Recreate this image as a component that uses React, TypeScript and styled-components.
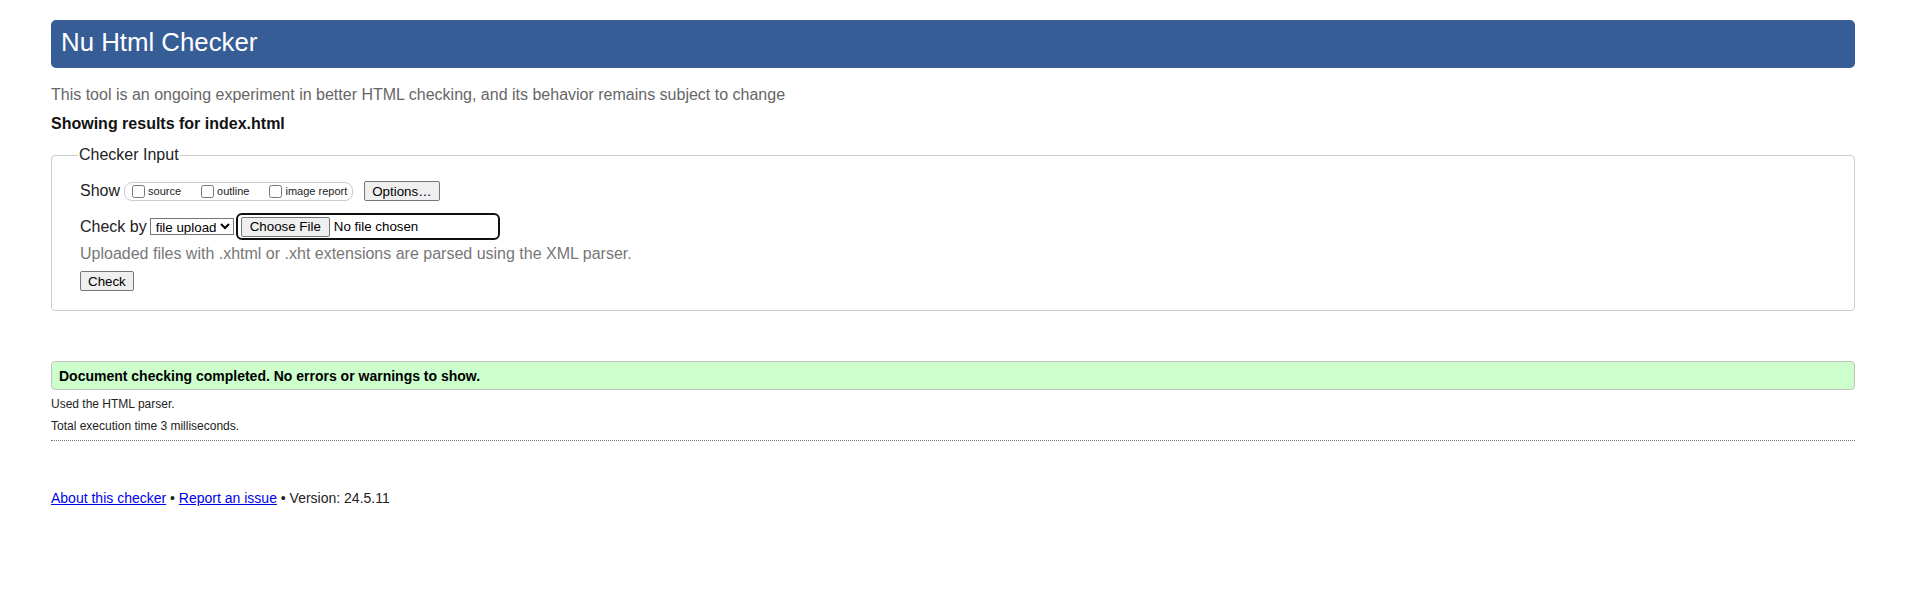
import React from 'react';
import styled, { createGlobalStyle } from 'styled-components';

const GlobalStyle = createGlobalStyle`
  html, body {
    margin: 0;
    padding: 0;
    background: #fff;
  }
  body {
    font-family: "Liberation Sans", Arial, Helvetica, sans-serif;
    font-size: 16px;
    color: #222;
  }
`;

const Page = styled.div`
  padding: 20px 52px 40px 51px;
`;

const Title = styled.h1`
  margin: 0;
  height: 48px;
  box-sizing: border-box;
  padding: 8px 10px 0;
  background: #365d95;
  color: #fff;
  font-size: 25.8px;
  font-weight: normal;
  line-height: 29px;
  border-radius: 5px;
`;

const Intro = styled.p`
  margin: 18px 0 0;
  color: #666;
  font-size: 16px;
`;

const Results = styled.p`
  margin: 11px 0 0;
  font-weight: bold;
  color: #111;
`;

const InputSet = styled.fieldset`
  margin: 13px 0 0;
  padding: 17px 28px 19px 28px;
  border: 1px solid #ccc;
  border-radius: 4px;
  min-width: 0;
`;

const Legend = styled.legend`
  margin-left: -2px;
  padding: 0 1px;
  font-size: 16px;
  color: #222;
`;

const Row = styled.div<{ $gap?: number; $top?: number; $height?: number }>`
  display: flex;
  align-items: center;
  height: ${(p) => p.$height ?? 20}px;
  margin-top: ${(p) => p.$top ?? 0}px;
  gap: ${(p) => p.$gap ?? 4}px;
`;

const FieldLabel = styled.span`
  font-size: 16px;
  color: #222;
`;

const ShowGroup = styled.div`
  display: flex;
  align-items: center;
  height: 19px;
  box-sizing: border-box;
  border: 1px solid #ccc;
  border-radius: 8px;
  padding: 0 5px 0 3px;
  gap: 16px;
`;

const CheckItem = styled.label`
  display: flex;
  align-items: center;
  font-size: 11px;
  color: #222;
`;

const CheckBox = styled.input.attrs({ type: 'checkbox' })`
  width: 13px;
  height: 13px;
  margin: 0 3px 0 4px;
`;

const Button = styled.button<{ $ml?: number }>`
  height: 20px;
  margin-left: ${(p) => p.$ml ?? 0}px;
  padding: 1px 7px;
  font-family: "Liberation Sans", Arial, sans-serif;
  font-size: 13.3333px;
  color: #000;
  background: #efefef;
  border: 1px solid #767676;
  border-radius: 2px;
  box-sizing: border-box;
`;

const Select = styled.select`
  width: 84px;
  height: 17px;
  font-family: "Liberation Sans", Arial, sans-serif;
  font-size: 13.3333px;
  color: #000;
  border: 1px solid #767676;
  border-radius: 0;
  padding: 0 0 0 1px;
  margin-left: 2px;
  background: #fff;
`;

const FileBox = styled.label`
  display: inline-flex;
  align-items: center;
  width: 264px;
  height: 27px;
  margin-left: 1px;
  box-sizing: border-box;
  border: 2px solid #101010;
  border-radius: 6px;
  box-shadow: inset 0 0 0 1px #fff;
  padding: 0 3px;
  font-family: "Liberation Sans", Arial, sans-serif;
  font-size: 13.3333px;
  color: #000;
`;

const FileButton = styled.span`
  display: inline-flex;
  align-items: center;
  height: 20px;
  box-sizing: border-box;
  padding: 0 8px;
  background: #efefef;
  border: 1px solid #767676;
  border-radius: 2px;
  margin-right: 4px;
`;

const Hint = styled.p`
  margin: 5px 0 0;
  color: #777;
  font-size: 16px;
`;

const CheckRow = styled.div`
  margin-top: 8px;
`;

const Status = styled.div`
  margin-top: 50px;
  padding: 6px 7px 5px;
  background: #ccffcc;
  border: 1px solid #c3c3c3;
  border-radius: 4px;
  font-size: 14px;
  font-weight: bold;
  color: #000;
`;

const Detail = styled.p<{ $top: number }>`
  margin: ${(p) => p.$top}px 0 0;
  font-size: 12px;
  color: #222;
`;

const Divider = styled.hr`
  margin: 7px 0 0;
  border: 0;
  border-top: 1px dotted #777;
  height: 0;
`;

const Footer = styled.p`
  margin: 49px 0 0;
  font-size: 14px;
  color: #222;
`;

const Link = styled.a`
  color: #0000ee;
  text-decoration: underline;
`;

export default function App() {
  return (
    <>
      <GlobalStyle />
      <Page>
        <Title>Nu Html Checker</Title>
        <Intro>
          This tool is an ongoing experiment in better HTML checking, and its behavior remains subject to change
        </Intro>
        <Results>Showing results for index.html</Results>
        <InputSet>
          <Legend>Checker Input</Legend>
          <Row $gap={4}>
            <FieldLabel>Show</FieldLabel>
            <ShowGroup>
              <CheckItem>
                <CheckBox />
                source
              </CheckItem>
              <CheckItem>
                <CheckBox />
                outline
              </CheckItem>
              <CheckItem>
                <CheckBox />
                image report
              </CheckItem>
            </ShowGroup>
            <Button $ml={7}>Options…</Button>
          </Row>
          <Row $gap={1} $top={12} $height={27}>
            <FieldLabel>Check by</FieldLabel>
            <Select defaultValue="file">
              <option value="file">file upload</option>
              <option value="address">address</option>
              <option value="text">text input</option>
            </Select>
            <FileBox>
              <FileButton>Choose File</FileButton>
              No file chosen
            </FileBox>
          </Row>
          <Hint>Uploaded files with .xhtml or .xht extensions are parsed using the XML parser.</Hint>
          <CheckRow>
            <Button>Check</Button>
          </CheckRow>
        </InputSet>
        <Status>Document checking completed. No errors or warnings to show.</Status>
        <Detail $top={7}>Used the HTML parser.</Detail>
        <Detail $top={8}>Total execution time 3 milliseconds.</Detail>
        <Divider />
        <Footer>
          <Link href="#about">About this checker</Link> • <Link href="#issue">Report an issue</Link> • Version:
          24.5.11
        </Footer>
      </Page>
    </>
  );
}
